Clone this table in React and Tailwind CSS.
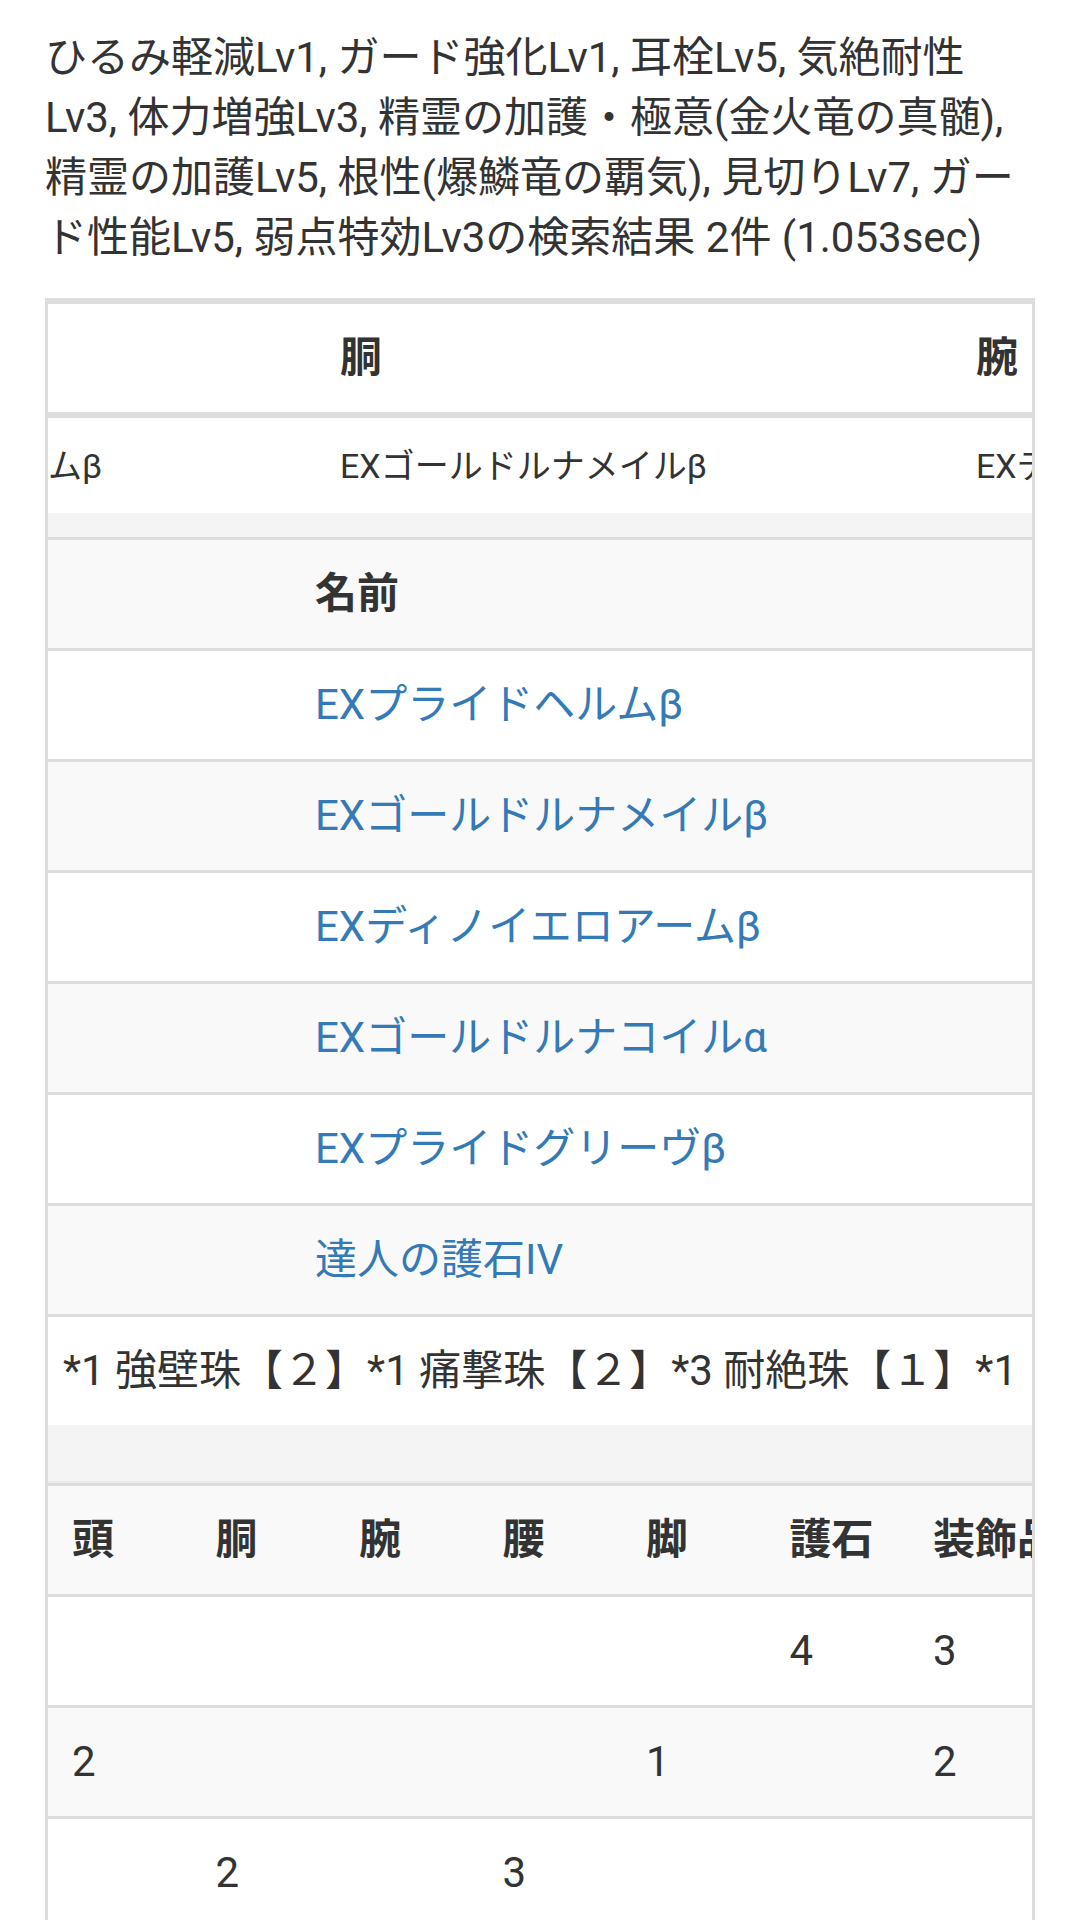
const intro = [
  "ひるみ軽減Lv1, ガード強化Lv1, 耳栓Lv5, 気絶耐性",
  "Lv3, 体力増強Lv3, 精霊の加護・極意(金火竜の真髄),",
  "精霊の加護Lv5, 根性(爆鱗竜の覇気), 見切りLv7, ガー",
  "ド性能Lv5, 弱点特効Lv3の検索結果 2件 (1.053sec)",
];

const armor = [
  { part: "頭", name: "EXプライドヘルムβ", w: "w-[536px]" },
  { part: "胴", name: "EXゴールドルナメイルβ", w: "w-[636px]" },
  { part: "腕", name: "EXディノイエロアームβ", w: "w-[636px]" },
  { part: "腰", name: "EXゴールドルナコイルα", w: "w-[636px]" },
];

const names = [
  "EXプライドヘルムβ",
  "EXゴールドルナメイルβ",
  "EXディノイエロアームβ",
  "EXゴールドルナコイルα",
  "EXプライドグリーヴβ",
  "達人の護石IV",
];

const slotHeads = ["頭", "胴", "腕", "腰", "脚", "護石", "装飾品"];
const slotRows = [
  ["", "", "", "", "", "4", "3"],
  ["2", "", "", "", "1", "", "2"],
  ["", "2", "", "3", "", "", ""],
];

function SlotRow({ cells, head, striped }) {
  return (
    <div className={`flex border-t-[3px] border-[#ddd] ${striped ? "bg-[#f9f9f9]" : "bg-white"}`}>
      {cells.map((c, i) => (
        <div key={i} className={`w-[143.5px] flex-none whitespace-nowrap py-[24px] pl-[24px] ${head ? "font-bold" : ""}`}>
          {c || "\u00a0"}
        </div>
      ))}
    </div>
  );
}

export default function App() {
  return (
    <div className="h-[1920px] overflow-hidden bg-white px-[45px] pt-[28px] font-[Roboto,'Noto_Sans_CJK_JP',sans-serif] text-[42px] leading-[60px] text-[#333]">
      <p className="mb-[30px]">
        {intro.map((line) => (
          <span key={line} className="block whitespace-nowrap">{line}</span>
        ))}
      </p>

      <div className="border-x-[3px] border-t-[3px] border-[#ddd]">
        {/* scrolled armor table */}
        <div className="overflow-hidden">
          <div className="-ml-[268px] flex border-t-[3px] border-b-[6px] border-[#ddd] bg-white">
            {armor.map((a) => (
              <div key={a.part} className={`${a.w} flex-none py-[24px] px-[24px] font-bold`}>{a.part}</div>
            ))}
          </div>
          <div className="-ml-[268px] flex h-[95px] items-center bg-white text-[34px] leading-[48px]">
            {armor.map((a) => (
              <div key={a.part} className={`${a.w} flex-none whitespace-nowrap px-[24px]`}>{a.name}</div>
            ))}
          </div>
          <div className="h-[24px] bg-[#f4f4f4]"></div>
        </div>

        {/* names */}
        <div className="border-t-[3px] border-[#ddd] bg-[#f9f9f9] py-[24px] pl-[267px] font-bold">名前</div>
        {names.map((n, i) => (
          <div
            key={n}
            className={`border-t-[3px] border-[#ddd] py-[24px] pl-[267px] ${i % 2 ? "bg-[#f9f9f9]" : "bg-white"}`}
          >
            <a href="#" className="whitespace-nowrap text-[#337ab7]">{n}</a>
          </div>
        ))}
        <div className="flex justify-center whitespace-nowrap border-t-[3px] border-[#ddd] bg-white py-[24px]">
          *1 強壁珠【２】*1 痛撃珠【２】*3 耐絶珠【１】*1
        </div>
        <div className="h-[58px] border-b-[2px] border-[#ebebeb] bg-[#f4f4f4]"></div>

        {/* slots */}
        <div className="overflow-hidden">
          <SlotRow cells={slotHeads} head striped />
          {slotRows.map((r, i) => (
            <SlotRow key={i} cells={r} striped={i % 2 === 1} />
          ))}
        </div>
      </div>
    </div>
  );
}
